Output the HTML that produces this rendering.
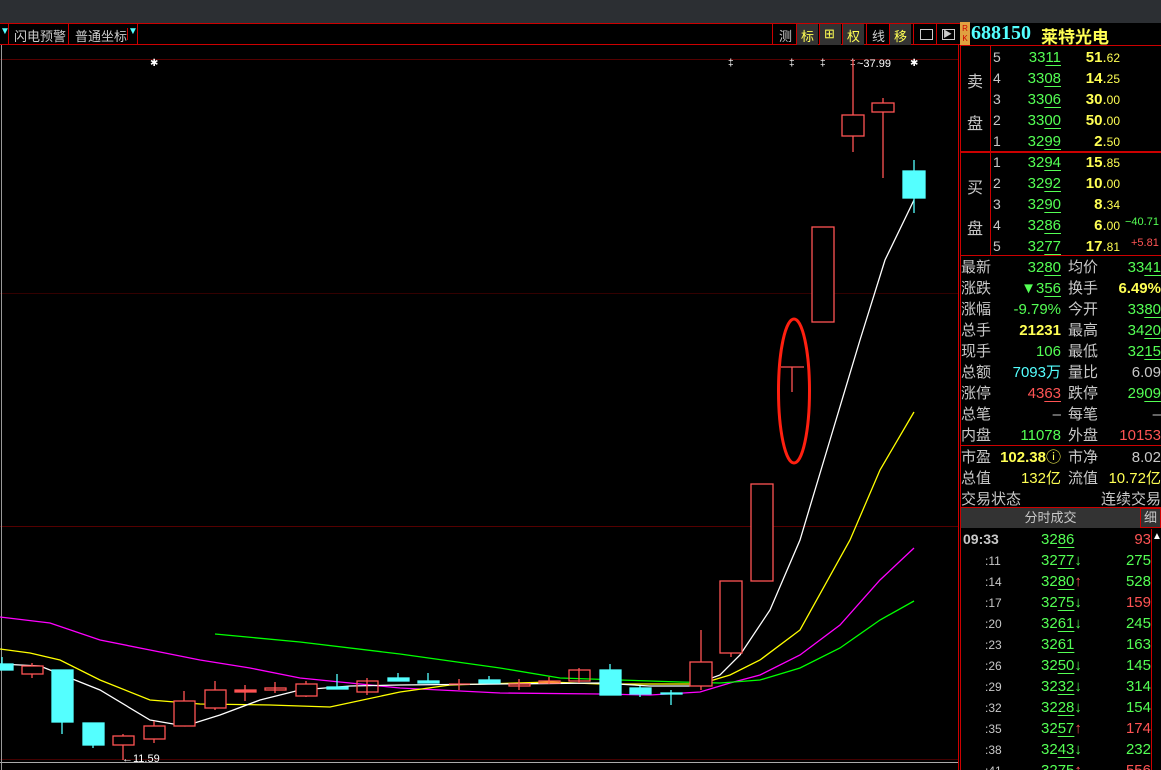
<!DOCTYPE html>
<html><head><meta charset="utf-8"><style>
*{margin:0;padding:0;box-sizing:border-box}
html,body{width:1161px;height:770px;overflow:hidden}
body{background:#000;position:relative;font-family:"Liberation Sans","Noto Sans CJK SC",sans-serif;color:#c8c8c8}
.a{position:absolute;white-space:nowrap}
.g{color:#54ff54}.y{color:#ffff54}.r{color:#ff5454}.c{color:#54ffff}.w{color:#c8c8c8}
.u{text-decoration:underline;text-underline-offset:3px}
.b{font-weight:bold}
.row{position:relative;height:21px}
.col>div{height:21px;overflow:hidden}
small{font-size:12px;line-height:0}
</style></head><body>
<div class="a" style="left:0;top:0;width:1161px;height:23px;background:#2c2f33"></div>
<!-- toolbar -->
<div class="a" style="left:0;top:23px;width:960px;height:22px;border-top:1px solid #c00;border-bottom:1px solid #c00"></div>
<div class="a" style="left:8px;top:23px;width:1px;height:22px;background:#c00"></div>
<div class="a" style="left:68px;top:23px;width:1px;height:22px;background:#c00"></div>
<div class="a" style="left:137px;top:23px;width:1px;height:22px;background:#c00"></div>
<div class="a" style="left:127px;top:28px;width:1px;height:12px;background:#c00"></div>
<div class="a c" style="left:0;top:26px;font-size:10px">▼</div>
<div class="a c" style="left:128px;top:26px;font-size:10px">▼</div>
<div class="a" style="left:14px;top:26px;font-size:13px;color:#ccc">闪电预警</div>
<div class="a" style="left:75px;top:26px;font-size:13px;color:#ccc">普通坐标</div>
<div class="a" style="left:772px;top:24px;width:188px;height:21px;border-left:1px solid #c00"></div>
<div class="a" style="left:779px;top:26px;font-size:13px;color:#ccc">测</div>
<div class="a" style="left:796px;top:24px;width:22px;height:21px;background:#333;border-left:1px solid #c00"></div><div class="a y" style="left:801px;top:26px;font-size:13px">标</div>
<div class="a" style="left:819px;top:24px;width:22px;height:21px;background:#333;border-left:1px solid #c00"></div><div class="a y" style="left:824px;top:26px;font-size:13px">⊞</div>
<div class="a" style="left:842px;top:24px;width:22px;height:21px;background:#333;border-left:1px solid #c00"></div><div class="a y" style="left:847px;top:26px;font-size:13px">权</div>
<div class="a" style="left:866px;top:24px;width:1px;height:21px;background:#c00"></div><div class="a" style="left:872px;top:26px;font-size:13px;color:#ccc">线</div>
<div class="a" style="left:889px;top:24px;width:22px;height:21px;background:#333;border-left:1px solid #c00"></div><div class="a y" style="left:894px;top:26px;font-size:13px">移</div>
<div class="a" style="left:913px;top:24px;width:1px;height:21px;background:#c00"></div><div class="a" style="left:920px;top:29px;width:13px;height:11px;border:1px solid #ccc"></div>
<div class="a" style="left:936px;top:24px;width:1px;height:21px;background:#c00"></div><div class="a" style="left:942px;top:29px;width:13px;height:11px;border:1px solid #ccc;font-size:9px;line-height:9px;color:#ccc">▶</div>
<!-- chart -->
<svg class="a" style="left:0;top:45px" width="960" height="725" viewBox="0 45 960 725">
<line x1="0" y1="59.5" x2="958" y2="59.5" stroke="#500" />
<line x1="0" y1="293.5" x2="958" y2="293.5" stroke="#300" />
<line x1="0" y1="526.5" x2="958" y2="526.5" stroke="#500" />
<line x1="0" y1="759.5" x2="958" y2="759.5" stroke="#400" />
<line x1="0" y1="762.5" x2="958" y2="762.5" stroke="#aaa" />
<line x1="1.5" y1="45" x2="1.5" y2="770" stroke="#999" />
<line x1="958.5" y1="45" x2="958.5" y2="770" stroke="#c00" />
<g fill="#fff" font-size="10" font-family="Liberation Sans">
<text x="150" y="66">✱</text><text x="728" y="66">‡</text><text x="789" y="66">‡</text><text x="820" y="66">‡</text><text x="850" y="66">‡</text><text x="910" y="66">✱</text>
<text x="857" y="67" font-size="11">~37.99</text>
<text x="122" y="762" font-size="11">←11.59</text>
</g>
<g fill="none" stroke-width="1.3">
<polyline stroke="#f0f" points="0,617 50,623 100,640 150,650 200,660 250,668 300,678 350,683 400,688 500,693 600,694 650,695 700,692 730,683 760,675 800,655 840,625 880,580 914,548"/>
<polyline stroke="#0f0" points="215,634 300,642 400,654 500,668 560,678 620,680 680,682 720,683 760,680 800,668 840,648 880,620 914,601"/>
<polyline stroke="#ff0" points="0,649 30,653 60,660 100,680 150,700 200,704 270,705 330,707 400,692 450,685 550,682 600,684 650,684 700,684 730,675 760,660 800,630 850,540 880,470 914,412"/>
<polyline stroke="#fff" points="0,664 40,666 100,690 150,720 185,726 220,715 260,700 300,690 350,686 400,685 500,684 600,683 650,686 690,686 720,675 740,655 770,610 800,540 830,440 860,340 885,260 914,200"/>
</g>
<g stroke="#ff5454" stroke-width="1.3" fill="none">
<line x1="32" y1="663" x2="32" y2="678"/><rect x="22" y="666" width="21" height="8" fill="#000"/>
<line x1="123" y1="734" x2="123" y2="760"/><rect x="113" y="736" width="21" height="9" fill="#000"/>
<line x1="154" y1="721" x2="154" y2="743"/><rect x="144" y="726" width="21" height="13" fill="#000"/>
<line x1="184" y1="691" x2="184" y2="726"/><rect x="174" y="701" width="21" height="25" fill="#000"/>
<line x1="215" y1="681" x2="215" y2="710"/><rect x="205" y="690" width="21" height="18" fill="#000"/>
<line x1="245" y1="685" x2="245" y2="701"/><rect x="235" y="690" width="21" height="2" fill="#ff5454"/>
<line x1="275" y1="682" x2="275" y2="693"/><rect x="265" y="688" width="21" height="2"/>
<line x1="306" y1="681" x2="306" y2="697"/><rect x="296" y="684" width="21" height="12" fill="#000"/>
<line x1="367" y1="678" x2="367" y2="695"/><rect x="357" y="681" width="21" height="11" fill="none"/>
<line x1="459" y1="679" x2="459" y2="690"/><line x1="449" y1="684" x2="470" y2="684"/>
<line x1="519" y1="679" x2="519" y2="690"/><rect x="509" y="684" width="21" height="2"/>
<line x1="549" y1="677" x2="549" y2="684"/><rect x="539" y="681" width="21" height="2"/>
<line x1="579" y1="668" x2="579" y2="683"/><rect x="569" y="670" width="21" height="11"/>
<line x1="701" y1="630" x2="701" y2="690"/><rect x="690" y="662" width="22" height="24" fill="#000"/>
<line x1="731" y1="653" x2="731" y2="657"/><rect x="720" y="581" width="22" height="72" fill="#000"/>
<rect x="751" y="484" width="22" height="97" fill="#000"/>
<line x1="781" y1="367" x2="804" y2="367"/><line x1="792" y1="367" x2="792" y2="392"/>
<rect x="812" y="227" width="22" height="95" fill="#000"/>
<line x1="853" y1="60" x2="853" y2="152"/><rect x="842" y="115" width="22" height="21" fill="#000"/>
<line x1="883" y1="98" x2="883" y2="178"/><rect x="872" y="103" width="22" height="9" fill="#000"/>
</g>
<g fill="#54ffff" stroke="#54ffff" stroke-width="1.3">
<rect x="0" y="664" width="13" height="6"/><line x1="2" y1="657" x2="2" y2="664"/>
<line x1="62" y1="670" x2="62" y2="734"/><rect x="52" y="670" width="21" height="52"/>
<line x1="93" y1="745" x2="93" y2="748"/><rect x="83" y="723" width="21" height="22"/>
<line x1="337" y1="674" x2="337" y2="689"/><rect x="327" y="687" width="21" height="2"/>
<line x1="398" y1="673" x2="398" y2="681"/><rect x="388" y="678" width="21" height="3"/>
<line x1="428" y1="673" x2="428" y2="683"/><rect x="418" y="681" width="21" height="2"/>
<line x1="489" y1="676" x2="489" y2="683"/><rect x="479" y="680" width="21" height="3"/>
<line x1="610" y1="664" x2="610" y2="695"/><rect x="600" y="670" width="21" height="25"/>
<line x1="640" y1="686" x2="640" y2="697"/><rect x="630" y="688" width="21" height="6"/>
<line x1="671" y1="690" x2="671" y2="705"/><rect x="661" y="693" width="21" height="1"/>
<line x1="914" y1="160" x2="914" y2="213"/><rect x="903" y="171" width="22" height="27"/>
</g>
<ellipse cx="794" cy="391" rx="15.5" ry="72" fill="none" stroke="#ff2010" stroke-width="3"/>
</svg>
<!-- right panel -->
<div class="a" style="left:960px;top:22px;width:10px;height:24px;background:#e0a040;font-size:8px;line-height:10px;color:#c00;text-align:center;padding-top:2px">R<br>K</div>
<div class="a b" style="left:971px;top:22px;font-size:20px;color:#54ffff;font-family:'Liberation Serif',serif">688150</div>
<div class="a y b" style="left:1041px;top:23px;font-size:17px">莱特光电</div>
<div class="a" style="left:960px;top:45px;width:201px;height:1px;background:#c00"></div>
<div class="a" style="left:960px;top:151px;width:201px;height:2px;background:#c00"></div>
<div class="a" style="left:960px;top:255px;width:201px;height:1px;background:#c00"></div>
<div class="a" style="left:960px;top:445px;width:201px;height:1px;background:#c00"></div>
<div class="a" style="left:960px;top:507px;width:201px;height:1px;background:#c00"></div>
<div class="a" style="left:960px;top:45px;width:1px;height:725px;background:#c00"></div>
<div class="a" style="left:990px;top:46px;width:1px;height:209px;background:#c00"></div>
<div class="a" style="left:967px;top:68px;font-size:16px">卖</div><div class="a" style="left:967px;top:110px;font-size:16px">盘</div>
<div class="a" style="left:967px;top:174px;font-size:16px">买</div><div class="a" style="left:967px;top:215px;font-size:16px">盘</div>
<div class="col" style="position:absolute;left:993px;top:47px;font-size:14px;line-height:21px">
<div>5</div><div>4</div><div>3</div><div>2</div><div>1</div><div>1</div><div>2</div><div>3</div><div>4</div><div>5</div></div>
<div class="g col" style="position:absolute;left:1000px;width:61px;text-align:right;top:47px;font-size:15px;line-height:21px">
<div>33<span class="u">11</span></div><div>33<span class="u">08</span></div><div>33<span class="u">06</span></div><div>33<span class="u">00</span></div><div>32<span class="u">99</span></div>
<div>32<span class="u">94</span></div><div>32<span class="u">92</span></div><div>32<span class="u">90</span></div><div>32<span class="u">86</span></div><div>32<span class="u">77</span></div></div>
<div class="y col" style="position:absolute;left:1060px;width:60px;text-align:right;top:47px;font-size:15px;line-height:21px">
<div><b>51</b>.<small>62</small></div><div><b>14</b>.<small>25</small></div><div><b>30</b>.<small>00</small></div><div><b>50</b>.<small>00</small></div><div><b>2</b>.<small>50</small></div>
<div><b>15</b>.<small>85</small></div><div><b>10</b>.<small>00</small></div><div><b>8</b>.<small>34</small></div><div><b>6</b>.<small>00</small></div><div><b>17</b>.<small>81</small></div></div>
<div class="a g" style="left:1125px;top:216px;font-size:11px">−40.71</div>
<div class="a r" style="left:1131px;top:237px;font-size:11px">+5.81</div>
<div style="position:absolute;left:961px;top:257px;font-size:15px;line-height:21px;width:200px">
<div class="row"><span>最新</span><span class="a g" style="right:100px;top:0">32<span class="u">80</span></span><span class="a" style="left:107px">均价</span><span class="a g" style="right:0">33<span class="u">41</span></span></div>
<div class="row"><span>涨跌</span><span class="a g" style="right:100px;top:0">▼3<span class="u">56</span></span><span class="a" style="left:107px">换手</span><span class="a y b" style="right:0">6.49%</span></div>
<div class="row"><span>涨幅</span><span class="a g" style="right:100px;top:0">-9.79%</span><span class="a" style="left:107px">今开</span><span class="a g" style="right:0">33<span class="u">80</span></span></div>
<div class="row"><span>总手</span><span class="a y b" style="right:100px;top:0">21231</span><span class="a" style="left:107px">最高</span><span class="a g" style="right:0">34<span class="u">20</span></span></div>
<div class="row"><span>现手</span><span class="a g" style="right:100px;top:0">106</span><span class="a" style="left:107px">最低</span><span class="a g" style="right:0">32<span class="u">15</span></span></div>
<div class="row"><span>总额</span><span class="a c" style="right:100px;top:0">7093万</span><span class="a" style="left:107px">量比</span><span class="a" style="right:0">6.09</span></div>
<div class="row"><span>涨停</span><span class="a r" style="right:100px;top:0">43<span class="u">63</span></span><span class="a" style="left:107px">跌停</span><span class="a g" style="right:0">29<span class="u">09</span></span></div>
<div class="row"><span>总笔</span><span class="a" style="right:100px;top:0">–</span><span class="a" style="left:107px">每笔</span><span class="a" style="right:0">–</span></div>
<div class="row"><span>内盘</span><span class="a g" style="right:100px;top:0">11078</span><span class="a" style="left:107px">外盘</span><span class="a r" style="right:0">10153</span></div>
<div class="row" style="margin-top:1px"><span>市盈</span><span class="a y b" style="right:100px;top:0">102.38<span style="font-weight:normal">ⓘ</span></span><span class="a" style="left:107px">市净</span><span class="a" style="right:0">8.02</span></div>
<div class="row"><span>总值</span><span class="a y" style="right:100px;top:0">132亿</span><span class="a" style="left:107px">流值</span><span class="a y" style="right:0">10.72亿</span></div>
<div class="row"><span>交易状态</span><span class="a" style="right:0">连续交易</span></div>
</div>
<div class="a" style="left:961px;top:508px;width:179px;height:20px;background:#333;font-size:13px;line-height:20px;text-align:center">分时成交</div>
<div class="a" style="left:1140px;top:508px;width:21px;height:20px;background:#333;border:1px solid #c00;font-size:13px;line-height:18px;text-align:center">细</div>
<div class="a" style="left:1151px;top:529px;width:1px;height:241px;background:#c00"></div>
<div class="a" style="left:1152px;top:531px;font-size:10px;color:#fff">▲</div>
<div style="position:absolute;left:961px;top:529px;width:190px;height:241px;overflow:hidden;font-size:15px;line-height:21px">
<div class="row"><span class="b" style="padding-left:2px;font-size:14px">09:33</span><span class="a g" style="left:80px">32<span class="u">86</span></span><span class="a r" style="right:0">93</span></div>
<div class="row"><span style="padding-left:24px;font-size:12px">:11</span><span class="a g" style="left:80px">32<span class="u">77</span>↓</span><span class="a g" style="right:0">275</span></div>
<div class="row"><span style="padding-left:24px;font-size:12px">:14</span><span class="a g" style="left:80px">32<span class="u">80</span><span class="r">↑</span></span><span class="a g" style="right:0">528</span></div>
<div class="row"><span style="padding-left:24px;font-size:12px">:17</span><span class="a g" style="left:80px">32<span class="u">75</span>↓</span><span class="a r" style="right:0">159</span></div>
<div class="row"><span style="padding-left:24px;font-size:12px">:20</span><span class="a g" style="left:80px">32<span class="u">61</span>↓</span><span class="a g" style="right:0">245</span></div>
<div class="row"><span style="padding-left:24px;font-size:12px">:23</span><span class="a g" style="left:80px">32<span class="u">61</span></span><span class="a g" style="right:0">163</span></div>
<div class="row"><span style="padding-left:24px;font-size:12px">:26</span><span class="a g" style="left:80px">32<span class="u">50</span>↓</span><span class="a g" style="right:0">145</span></div>
<div class="row"><span style="padding-left:24px;font-size:12px">:29</span><span class="a g" style="left:80px">32<span class="u">32</span>↓</span><span class="a g" style="right:0">314</span></div>
<div class="row"><span style="padding-left:24px;font-size:12px">:32</span><span class="a g" style="left:80px">32<span class="u">28</span>↓</span><span class="a g" style="right:0">154</span></div>
<div class="row"><span style="padding-left:24px;font-size:12px">:35</span><span class="a g" style="left:80px">32<span class="u">57</span><span class="r">↑</span></span><span class="a r" style="right:0">174</span></div>
<div class="row"><span style="padding-left:24px;font-size:12px">:38</span><span class="a g" style="left:80px">32<span class="u">43</span>↓</span><span class="a g" style="right:0">232</span></div>
<div class="row"><span style="padding-left:24px;font-size:12px">:41</span><span class="a g" style="left:80px">32<span class="u">75</span><span class="r">↑</span></span><span class="a r" style="right:0">556</span></div>
</div>
</body></html>
